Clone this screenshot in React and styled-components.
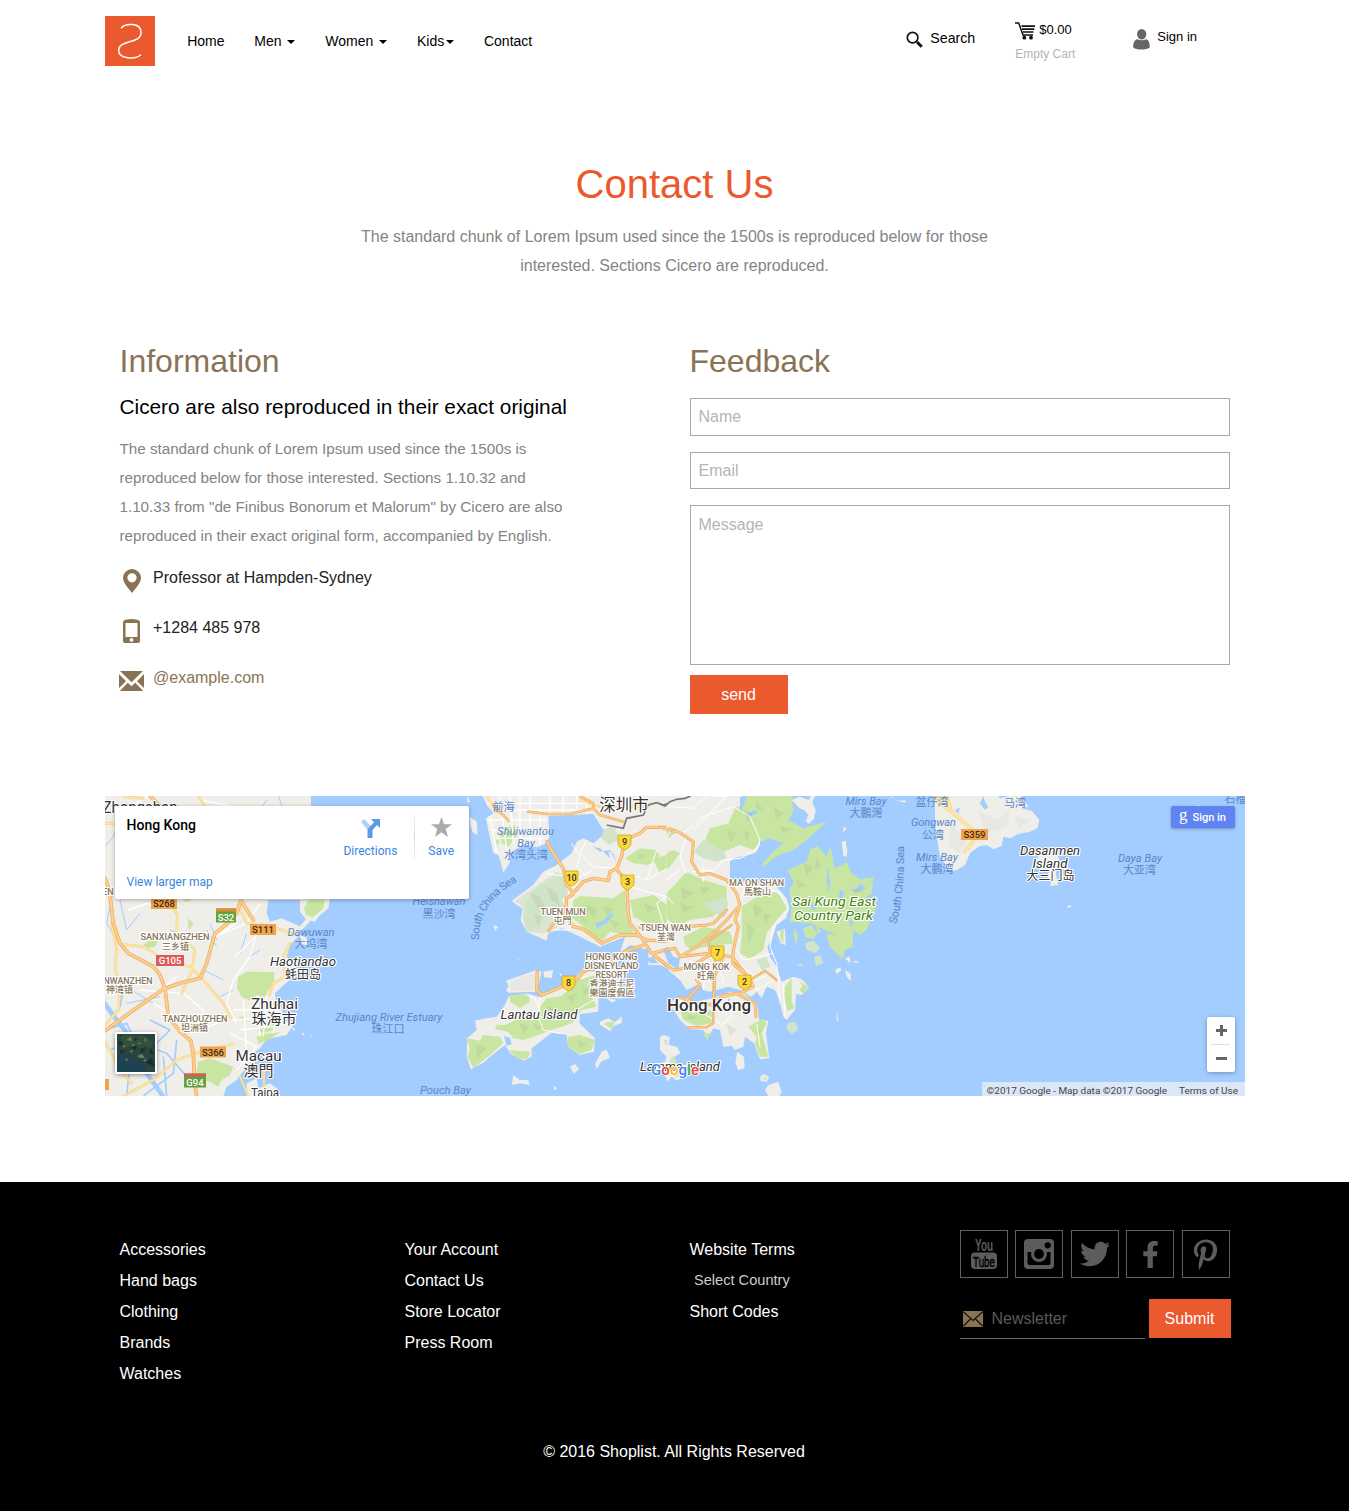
import React from "react";
import styled, { createGlobalStyle, css } from "styled-components";
import { FaTwitter, FaFacebookF, FaPinterestP } from "react-icons/fa";

const GlobalStyle = createGlobalStyle`
  * { box-sizing: border-box; }
  body {
    margin: 0;
    background: #fff;
    color: #000;
    font-family: "Liberation Sans", Arial, sans-serif;
    font-size: 16px;
  }
  h1, h2, h3, p, ul { margin: 0; padding: 0; font-weight: 400; }
  ul { list-style: none; }
  a { color: inherit; text-decoration: none; }
  svg { display: block; flex: none; }
`;

const orange = "#eb592e";
const brown = "#8a7355";

const Container = styled.div`
  width: 1140px;
  margin: 0 auto;
`;

/* ---------- header ---------- */

const Header = styled(Container).attrs({ as: "header" })`
  display: flex;
  align-items: flex-start;
  height: 162px;
  padding-top: 16px;
`;

const Logo = styled.a`
  width: 50px;
  height: 50px;
  margin-left: 0.5px;
  background: ${orange};
`;

const Nav = styled.nav`
  display: flex;
  gap: 29.8px;
  margin-left: 32.2px;
  font-size: 14px;
  line-height: 50px;
  white-space: pre;
`;

const NavLink = styled.a`
  display: flex;
  align-items: center;
`;

const Caret = styled.i`
  width: 8px;
  margin: 2px 0 0 2px;
  border: 4px solid transparent;
  border-top-color: #000;
  border-bottom: 0;
`;

const Tools = styled.div`
  display: flex;
  align-items: flex-start;
  margin-left: auto;
  padding-right: 47.5px;
`;

const Tool = styled.a`
  display: flex;
  gap: ${(p) => p.$gap}px;
  margin: ${(p) => p.$top}px 0 0 ${(p) => p.$left}px;
  font-size: ${(p) => p.$size}px;
  line-height: 20px;
`;

const ToolIcon = styled.span`
  margin-top: ${(p) => p.$drop}px;
`;

const Cart = styled.div`
  width: 61px;
  margin-left: 40px;
  margin-top: 4px;
`;

const CartTotal = styled.div`
  display: flex;
  gap: 4px;
  font-size: 13px;
  line-height: 20px;
`;

const CartState = styled.p`
  margin-top: 4px;
  font-size: 12px;
  line-height: 20px;
  color: #b4b4b4;
`;

/* ---------- contact ---------- */

const Intro = styled.section`
  height: 177px;
  text-align: center;
`;

const Title = styled.h1`
  font-size: 40px;
  line-height: 44px;
  color: ${orange};
`;

const Lead = styled.p`
  width: 660px;
  margin: 16px auto 0;
  line-height: 29px;
  color: #848484;
`;

const Columns = styled(Container).attrs({ as: "section" })`
  display: grid;
  grid-template-columns: 1fr 1fr;
  height: 457px;
`;

const Column = styled.div`
  padding: 0 15px;
`;

const Heading = styled.h2`
  font-size: 32px;
  line-height: 44px;
  color: ${brown};
`;

const SubHeading = styled.h3`
  margin-top: 12px;
  font-size: 20.8px;
  line-height: 24px;
`;

const Body = styled.p`
  width: 452px;
  margin: 15px 0 3px;
  font-size: 15.2px;
  line-height: 29px;
  color: #848484;
`;

const ContactRow = styled.li`
  display: flex;
  height: 50px;
  line-height: 50px;
  color: ${(p) => (p.$link ? brown : "#222")};
`;

const ContactIcon = styled.span`
  display: flex;
  align-items: center;
  justify-content: center;
  width: 25px;
  margin: 3px 9px -3px -0.5px;
`;

const fieldStyle = css`
  display: block;
  width: 540px;
  margin: 0;
  border: 1px solid #a9a9ac;
  border-radius: 0;
  background: #fff;
  font: 16px "Liberation Sans", Arial, sans-serif;
  outline: 0;
  &::placeholder { color: #b5b5b5; opacity: 1; }
`;

const Field = styled.input`
  ${fieldStyle}
  height: ${(p) => p.$height}px;
  margin-bottom: 16px;
  padding: 0 8px;
`;

const Message = styled.textarea`
  ${fieldStyle}
  height: 160px;
  padding: 10px 8px;
  resize: none;
`;

const Form = styled.form`
  margin-top: 15px;
`;

const Button = styled.button`
  width: ${(p) => p.$width}px;
  height: 39px;
  padding: 0;
  border: 0;
  background: ${orange};
  color: #fff;
  font: 16px "Liberation Sans", Arial, sans-serif;
`;

const SendButton = styled(Button)`
  display: block;
  margin-top: 10px;
`;

/* ---------- map ---------- */

const MapFrame = styled.section`
  position: relative;
  width: 1140px;
  height: 300px;
  margin: 0 auto 86px;
  left: 0.5px;
  overflow: hidden;
  font-family: Roboto, "Noto Sans CJK SC", sans-serif;
`;

const PlaceCard = styled.div`
  position: absolute;
  left: 10px;
  top: 10px;
  display: flex;
  width: 354px;
  height: 93px;
  padding: 9px 15px 9px 11.5px;
  border-radius: 2px;
  background: #fff;
  box-shadow: 0 1px 4px rgba(0, 0, 0, 0.3);
  font-size: 12px;
  color: #3a84df;
`;

const PlaceText = styled.div`
  display: flex;
  flex-direction: column;
  justify-content: space-between;
  flex: 1;
`;

const PlaceName = styled.strong`
  font-size: 14px;
  line-height: 20px;
  font-weight: 500;
  color: #000;
`;

const PlaceLink = styled.a`
  line-height: 16px;
`;

const PlaceAction = styled.a`
  display: flex;
  flex-direction: column;
  align-items: center;
  justify-content: flex-end;
  gap: ${(p) => p.$gap}px;
  height: 44px;
  margin: 0 ${(p) => p.$right}px 0 ${(p) => p.$left}px;
  line-height: 16px;
`;

const PlaceDivider = styled.i`
  width: 1px;
  height: 46px;
  background: linear-gradient(#f4f4f4, #d8d8d8, #f4f4f4);
`;

const SignInBadge = styled.a`
  position: absolute;
  right: 10px;
  top: 10px;
  display: flex;
  align-items: center;
  gap: 5px;
  width: 64px;
  height: 22px;
  padding-left: 8px;
  border-radius: 2px;
  background: #5f84f2;
  box-shadow: 0 1px 3px rgba(0, 0, 0, 0.3);
  color: #fff;
  font-size: 11px;
  font-weight: 500;
`;

const GoogleG = styled.span`
  font: 17px/20px "Liberation Serif", serif;
  margin-top: -4px;
`;

const Zoom = styled.div`
  position: absolute;
  right: 10px;
  bottom: 24px;
  width: 28px;
  height: 55px;
  border-radius: 2px;
  background: #fff;
  box-shadow: 0 1px 4px rgba(0, 0, 0, 0.3);
`;

const Thumb = styled.div`
  position: absolute;
  left: 10px;
  top: 236px;
  border: 2px solid #fff;
  border-radius: 2px;
  box-shadow: 0 1px 4px rgba(0, 0, 0, 0.4);
`;

const Attribution = styled.div`
  position: absolute;
  right: 0;
  bottom: 0;
  display: flex;
  justify-content: space-between;
  width: 263px;
  height: 14px;
  padding: 0 7px 0 4.5px;
  background: rgba(238, 240, 243, 0.75);
  font-size: 9.97px;
  line-height: 18px;
  color: #444;
  white-space: nowrap;
`;

/* ---------- footer ---------- */

const Footer = styled.footer`
  height: 329px;
  background: #000;
  color: #fff;
`;

const FooterGrid = styled(Container)`
  display: grid;
  grid-template-columns: 285px 285px 285px 285px;
  height: 260px;
`;

const LinkList = styled.ul`
  padding: 52px 15px 0;
`;

const FooterLink = styled.li`
  height: 30.9px;
  line-height: 31px;
  ${(p) =>
    p.$muted &&
    css`
      padding-left: 4.5px;
      font-size: 14.6px;
      color: #ccc;
    `}
`;

const Connect = styled.div`
  padding-top: 48px;
`;

const Socials = styled.div`
  display: flex;
  justify-content: space-between;
  width: 270px;
`;

const Social = styled.a`
  display: flex;
  align-items: center;
  justify-content: center;
  width: 48px;
  height: 48px;
  border: 1px solid #606060;
  color: #5c5c5c;
`;

const Subscribe = styled.form`
  display: flex;
  gap: 4px;
  margin-top: 21px;
`;

const NewsletterBox = styled.label`
  display: flex;
  align-items: center;
  gap: 9px;
  width: 185px;
  height: 40px;
  padding-left: 3px;
  border-bottom: 1px solid #666;
`;

const NewsletterInput = styled.input`
  flex: 1;
  min-width: 0;
  padding: 0;
  border: 0;
  background: transparent;
  color: #fff;
  font: 16px "Liberation Sans", Arial, sans-serif;
  &::placeholder { color: #5a5a5a; opacity: 1; }
`;

const Copyright = styled.p`
  padding-right: 1px;
  line-height: 20px;
  text-align: center;
`;

/* ---------- icons ---------- */

const LogoMark = () => (
  <svg width="50" height="50" viewBox="0 0 50 50" fill="none" stroke="#fff" strokeWidth="1.500" strokeLinecap="round">
    <path d="M16.500 11.800C20 7.500 36 6 36 16.500C36 28.500 13.700 23 13.700 34.500C13.700 43.500 31 43.200 35.500 39" />
  </svg>
);

const SearchIcon = () => (
  <svg width="17" height="17" viewBox="0 0 17 17" fill="none" stroke="#111">
    <circle cx="6.600" cy="6.600" r="5.300" strokeWidth="1.700" />
    <path d="M11 11l4.700 4.700" strokeWidth="3" />
  </svg>
);

const CartIcon = () => (
  <svg width="20" height="18" viewBox="0 0 20 18" fill="none" stroke="#111">
    <path d="M0 1h3.700l4.300 12h10" strokeWidth="1.500" />
    <path d="M6.500 4.200H20M7 7.200h12.300M8 10h10.500" strokeWidth="1.700" />
    <circle cx="9.300" cy="15.700" r="1.900" fill="#111" stroke="none" />
    <circle cx="16" cy="15.700" r="1.900" fill="#111" stroke="none" />
  </svg>
);

const UserIcon = () => (
  <svg width="17" height="21" viewBox="0 0 17 21" fill="#666">
    <ellipse cx="8.700" cy="5.300" rx="4.600" ry="5.200" />
    <path d="M4.500 10.300c2.500 1.300 6 1.300 8.600 0c2.900.6 3.700 4 3.700 8.200c-4 2.800-12.800 2.800-16.600 0c0-4.200.9-7.600 4.300-8.200z" />
  </svg>
);

const PinIcon = () => (
  <svg width="18" height="24" viewBox="0 0 18 24">
    <path fill={brown} fillRule="evenodd" d="M9 0a9 9 0 0 0-9 9c0 4.500 5 10 9 15c4-5 9-10.500 9-15a9 9 0 0 0-9-9zm0 4.200a4.600 4.600 0 1 1 0 9.200a4.600 4.600 0 0 1 0-9.200z" />
  </svg>
);

const PhoneIcon = () => (
  <svg width="17" height="24" viewBox="0 0 17 24">
    <path fill={brown} fillRule="evenodd" d="M3 .8Q8.500-.6 14 .8Q17 1.200 17 3.500V22q0 2-2 2H2q-2 0-2-2V3.500Q0 1.200 3 .8zM2.500 4v14h12V4zM8.500 19a1.900 1.900 0 1 0 0 3.800a1.900 1.900 0 0 0 0-3.800z" />
  </svg>
);

const EnvelopeIcon = () => (
  <svg width="25" height="20" viewBox="0 0 25 20" fill={brown}>
    <path d="M1 0H24L12.500 11.300z" />
    <path d="M0 3l7 7.200L0 17zM25 3l-7 7.200l7 6.800z" />
    <path d="M.8 20l8-8.200l3.700 3.400l3.700-3.400l8 8.200z" />
  </svg>
);

const NewsletterIcon = () => (
  <svg width="20" height="16" viewBox="0 0 20 16">
    <rect width="20" height="16" rx="1" fill={brown} />
    <path d="M.5 1L10 9.500L19.500 1M.5 15l7-7M19.500 15l-7-7" fill="none" stroke="#111" strokeWidth="1.200" />
  </svg>
);

const YoutubeIcon = () => (
  <svg width="28" height="32" viewBox="0 0 28 32" fontFamily="Liberation Sans, sans-serif" fontWeight="700">
    <text x="5" y="12.500" fontSize="16" textLength="18" lengthAdjust="spacingAndGlyphs" fill="#5c5c5c">You</text>
    <rect x="1" y="14.500" width="26" height="16.500" rx="4" fill="#5c5c5c" />
    <text x="3" y="28.500" fontSize="15" textLength="22" lengthAdjust="spacingAndGlyphs" fill="#000" fontWeight="400" stroke="#000" strokeWidth=".5">Tube</text>
  </svg>
);

const InstagramIcon = () => (
  <svg width="30" height="30" viewBox="0 0 30 30">
    <rect width="30" height="30" rx="4" fill="#5c5c5c" />
    <path d="M3.500 13H26.500V24q0 2-2 2h-19q-2 0-2-2z" fill="#000" />
    <circle cx="15" cy="15" r="8" fill="#5c5c5c" />
    <circle cx="15" cy="15" r="4.900" fill="#000" />
    <circle cx="23.700" cy="6.300" r="3.100" fill="#000" />
  </svg>
);

/* ---------- map drawing ---------- */

const land = "#f0eee9";
const green = "#c8e6a2";
const water = "#a3ccff";

/* motorways carry a darker casing under the lighter core */
const Road = ({ d, w = 8, minor }) => (
  <g fill="none" strokeLinejoin="round" strokeLinecap="round">
    <path d={d} stroke={minor ? "#f3d488" : "#eda957"} strokeWidth={w} />
    <path d={d} stroke={minor ? "#ffe8a5" : "#fccf91"} strokeWidth={w - 4} />
  </g>
);

const Streets = ({ d, w = 3 }) => <path d={d} fill="none" stroke="#fff" strokeWidth={w} strokeLinejoin="round" />;

/* faint hill shading */
const Relief = ({ d }) => <path d={d} fill="#8a8a78" fillOpacity=".13" />;

const tones = {
  sea: { fill: "#5a87c9", fontStyle: "italic", halo: "none" },
  seaHan: { fill: "#5a87c9", halo: "none" },
  town: { fill: "#86765c", fontWeight: 500, halo: "#fff" },
  city: { fill: "#333", halo: "#fff" },
  isle: { fill: "#333", fontStyle: "italic", halo: "#fff" },
  park: { fill: "#3f8410", fontStyle: "italic", halo: "#fff" },
};

const Label = ({ x, y, s = 11, w, tone = "sea", children, ...rest }) => {
  const { halo, ...look } = tones[tone];
  return (
    <text x={x} y={y} fontSize={s} textAnchor="middle" textLength={w} lengthAdjust="spacingAndGlyphs"
      stroke={halo} strokeWidth="2.200" strokeLinejoin="round" paintOrder="stroke" {...look} {...rest}>
      {children}
    </text>
  );
};

const Sign = ({ x, y, w = 26, fill = "#f1a24c", color = "#3d2c10", cap, children }) => (
  <g>
    <rect x={x} y={y} width={w} height={cap ? 14 : 11} fill={fill} />
    {cap && <rect x={x} y={y} width={w} height="3" fill={cap} />}
    <text x={x + w / 2} y={y + (cap ? 12 : 9)} fontSize="9.500" fontWeight="500" textAnchor="middle" fill={color}>{children}</text>
  </g>
);

const Shield = ({ x, y, n }) => (
  <g>
    <path d={`M${x - 6.5} ${y - 7}h13v8q0 4-6.500 7q-6.500-3-6.500-7z`} fill="#fbd837" stroke="#c9a526" strokeWidth=".8" />
    <text x={x} y={y + 3.3} fontSize="9" fontWeight="500" textAnchor="middle" fill="#333">{n}</text>
  </g>
);

const WestShore = () => (
  <g transform="translate(-5 -6) scale(.33333)">
    <path fill={land} d="M0 0H633V60L600 330H505L500 370L510 395L545 385L575 398L605 412L590 445L570 465L560 500L585 530L575 565L545 590L525 610L530 640L545 655L550 690L580 705L560 735L500 748L480 775L460 790L455 820L425 850L410 870L380 890L370 918V960H0z" />
    <path fill={land} d="M600 325H690L685 355L655 380L645 395L620 390L600 365zM620 385l10 10l-25 25l-10-5zM600 435l28 12l-8 18l-24-4zM440 880L470 865L475 895L510 880L530 895L545 925H440zM608 725l6 12l-8-2zM630 735l8 4l-8 0zM575 712l12 4l-6 8z" />
    <path fill={green} d="M415 560L440 545L522 546L524 585L505 600L495 620L470 615L450 632L425 620L410 595zM295 815L330 805L400 830L390 855L365 870L355 890L330 875L300 870L290 845zM130 465L150 450L175 455L165 470L140 474zM265 385l15 15l-10 20l-6-10zM470 740l20-8l50-5l-30 20l-35 15zM240 325h40l-20 12zM415 685l20-10l0 20zM470 720l45-15l15-25l5 10l-15 30l-30 10zM612 355L625 330L675 328L670 355L640 382L618 375zM480 395l40 25l-20 10z" />
    <g fill="none" stroke={water} strokeLinejoin="round">
      <path strokeWidth="14" d="M10 635L50 690L110 765L140 850L190 920" />
      <path strokeWidth="5" d="M10 720L80 700L110 760L200 790L260 860M30 780L150 730L160 780L90 820L80 918M150 690L210 720L130 800M20 700L60 650L70 600L50 560M190 800L200 918M230 750L220 850L130 918" />
      <path strokeWidth="3" d="M40 300L20 400L70 480M60 330L80 420L120 370M80 110L60 220L110 300M15 170L40 140L70 60L130 70M480 60L500 30M535 18L550 60M320 420L350 470M310 540L370 570M450 500L480 480M210 420L260 440M30 560L160 640M80 640L180 620M360 620L400 600M330 400l20 50M440 430l-20 60" />
    </g>
    <Streets d="M470 430L450 500L400 570L380 640L410 700M400 660H530M395 690L550 680M430 630L440 800M470 620L480 740M500 620L490 740M390 730L470 770L410 840M530 660L520 730M410 400L345 440L440 400L480 340M120 600L250 610L310 660L300 720L380 690M85 360L140 340L200 360M160 640L260 700M230 560L180 600M405 500l80-80M120 80L100 45L145 18M300 30L400 50M420 720L520 710" w="4" />
    <Road minor d="M15 100H60M70 20L130 25M205 325L232 375L230 420L232 440L270 465L285 480L275 545L245 610M60 462L130 470L180 500L270 530L310 570L370 640L395 685M35 400L50 480L45 530L60 600L55 660L15 705M70 918L160 870L230 810L300 785L400 762M415 345L440 400L530 415L590 435M570 460L550 500L555 560L520 580L508 615M15 755L60 840L95 880" />
    <Road minor d="M420 860L445 918M492 840V918M295 18L315 48" w={7} />
    <Road d="M150 18L180 48M15 265L28 300L40 400L60 460L85 490L160 530L180 555L195 595L205 680L240 725L272 752L280 790L283 870L290 918M15 722L90 668L190 597L240 580L300 565L320 520L345 430L380 402L410 370L425 325M425 335L460 390" w={11} />
  </g>
);

const Shenzhen = () => (
  <g transform="translate(275 -6) scale(.33333)">
    <path fill={land} d="M300 0H960V400H800L690 140L665 112L640 72L505 78L508 140L500 160L470 172L430 165L395 185L388 220L370 248L362 215L355 195L340 190L325 120L318 85L340 70L320 45zM262 15L270 35L262 40zM268 80l22 14l3 40l-20-20zM277 105l14 10v20l-15-10z" />
    <path fill={land} d="M700 110L640 160L610 145L590 155L575 190L530 225L490 245L460 285L395 332L410 345L428 355L422 390L440 425L500 452L505 430L545 415L600 440L660 470L735 440L720 490L750 465L805 480L805 525L840 525L860 535H1050V60H780zM340 405l15 5l-10 12zM360 455l5 25zM415 505l4 2l-4 3z" />
    <path fill="#dce5d2" d="M405 332L475 285L530 245L555 260L565 310L550 390L520 425L480 430L440 425L430 390L428 350z" />
    <path fill="#d1e3c8" d="M475 285L548 255L560 310L545 350L500 365L480 420L440 425L430 385L440 330z" />
    <path fill={green} d="M580 330L600 318L700 325L735 300L740 380L765 440L690 425L665 455L630 430L605 405L575 385zM735 205L780 175L830 180L845 210L800 225L760 220zM750 330L820 315L870 350V410L800 400L760 380zM360 120l45-15l5 35l-25 30l-20-10zM345 145l15 8l-8 15zM820 210L870 190V230L840 250z" />
    <path fill="#d3e4c8" d="M670 120L705 105L715 150L685 165L665 145z" />
    <path fill={water} d="M645 400l25-8l25-25l5 8l-20 25l-30 15zM640 170l20 15l30-5l20 40l-10-30l-15-5l5 20l-30-30zM800 505l20-5l15 20h-25z" />
    <path fill={land} d="M378 572L470 540L485 546L470 605L385 608L378 600L386 588zM490 545l30-5l-5 25l-22-3z" />
    <path fill="#e8e7e5" d="M390 575L468 545L460 600L390 604z" />
    <path fill={land} d="M385 620L440 610L480 622L530 602L580 570L610 535L640 545L720 530L750 535L720 580L690 600L655 625L655 665L600 672L598 700L645 745L642 785L600 795L565 770L560 735L515 728L455 775V800L430 812L390 790L375 765L330 800L310 818L272 838L260 800L262 745L290 720L285 692L320 685L350 680L375 645z" />
    <path fill={green} d="M258 745L300 752L310 735L360 740L370 760L330 795L280 835L262 800L270 775zM390 615L445 612L450 635L420 655L390 635zM375 705L420 685L470 690L480 650L500 625L545 618L600 565L655 575L630 610L650 650L605 660L575 700L515 720L475 735L430 750L400 745L385 725L345 718L350 704zM565 740L600 735L645 750L635 780L600 792L562 768zM385 780L450 785L445 805L420 810zM610 565L690 545L670 570L640 580z" />
    <path fill={water} d="M372 738l18 5l5 20l-15 5z" />
    <path fill={land} d="M660 695l25-10l20 12l20-18v20l-25 10l-10 15l-30-20zM665 785l15-6l10 25l-25 10l-15 22l-5-15zM570 830l15-8l12 15l-15 15zM400 855l20 15h25l5 15l-30-5l-25 5zM520 888l12 6l-8 8zM710 495l15-5l-5 10zM650 480l8 3zM680 625l30 5l-15 8z" />
    <path fill={green} d="M675 698l30-4l15-10l-18 15l-5 20l-22-15z" />
    <Relief d="M450 310l30 10l20 40l-30-10zM500 290l30 20l10 40l-25-20zM460 370l25 10l-10 30zM620 345l30 10l-5 25l-25-15zM670 350l30 5l-20 25zM600 370l25 30l-15-5zM690 390l30 10l-15 15zM770 190l30 5l-20 15zM790 340l40 15l-25 15zM290 765l30 10l-30 30zM420 700l30 10l-20 20zM500 650l40 10l-30 30zM560 620l30-10l-15 30zM590 750l30 10l-20 15zM460 700l30 10l-20 12zM610 590l25 10l-25 20z" />
    <Streets d="M575 160L600 200L590 230L620 260M620 150L600 190L640 230L700 235M640 240L560 280L570 330M500 250L560 260L600 290M740 250L800 270L870 230M750 290L820 310L860 320L830 340L850 400L870 430M550 330L570 420L520 420M545 330L595 310M830 180L800 270M480 620L475 680L490 720L540 730M440 615L465 625L480 660M480 680L540 690L640 630M540 550L560 580L620 560" />
    <Streets d="M320 90H500M340 60H640M320 40H650M360 18L380 180M390 18L400 160M420 20V165M450 18V165M480 60V165M510 18V72M550 18V72M590 18V70M620 18V70M335 120H500M340 145H495M330 80L350 190" w="4" />
    <Road minor d="M320 18L350 65M600 30L660 50L800 50" />
    <Road d="M340 45L385 92M445 65L500 72L570 72L640 55L640 40L600 18M640 55L660 75L730 95" w={8} />
    <Road d="M500 155L520 190L550 235L560 285L580 310L610 275L640 265L685 272L690 245L710 235L725 200L733 150L780 130L800 112H870M710 238L740 275L745 370L750 400L790 450L810 485L870 535M580 312L560 325L555 375L580 410L605 415L635 435L665 460L720 435L770 435L800 450L870 455M700 508L735 485L790 465M472 545L470 600L485 615L510 605L590 570L610 545L700 510M820 490L870 475M780 412L870 415" w={10} />
    <Road d="M505 422L522 398" w={8} />
    <path d="M680 105L730 115L740 85L790 75L805 45L830 38L850 45L870 38" fill="none" stroke="#777" strokeWidth="5" />
  </g>
);

const HongKong = () => (
  <g transform="translate(555 -6) scale(.33333)">
    <path fill={land} d="M20 0H255L240 35L250 60L300 130L300 165L285 190L220 205L190 235L150 240L210 268L250 275L300 290L345 285L380 325L388 350L378 385L350 405L335 450L322 470L330 500L350 530L365 575L400 560L425 568L447 592L425 615L408 612L405 660L380 690L370 680L360 635L345 600L320 590L305 625L290 605L275 620L240 600L205 590L170 600L150 605L130 600L120 580L80 600L60 570L30 545L20 530z" />
    <path fill={land} d="M20 640L60 620L100 635L160 625L210 605L250 610L290 640L298 690L325 692L318 730L328 805L300 808L282 760L255 740L250 770L225 780L215 768L190 770L180 720L160 715L145 740L130 720L90 718L60 690L45 665zM0 740L12 735L30 742L26 765L50 770L62 790L42 800L50 825L95 825L88 850L50 872L35 860L22 875L10 840L-5 845L-20 825L15 815L20 800L0 780zM232 785l20 15l2 35l-20 5l-8-25zM300 860l12-8l15 8l-5 15l-20-2zM325 885l30-10l10 30l-10 18l-30-5l-10-18z" />
    <path fill={green} d="M225 55L245 45L250 15H395L400 65L385 90L430 115L500 95L440 150L400 180L345 200L310 232L308 220L340 185L370 160L330 145L300 155L280 180L240 165L190 185L150 175L135 150L150 115L205 100z" />
    <path fill={green} d="M382 240L440 215L450 180L472 168L500 200L510 170L518 200L522 235L545 225L560 215L575 250L600 268L640 262L635 310L615 325L650 345L620 420L600 435L580 420L578 470L555 480L548 508L510 470L498 430L530 435L450 400L390 395L395 350L388 300L402 275z" />
    <path fill={green} d="M20 310L80 245L130 270L200 290L200 330L160 380L90 390L50 410L20 385zM245 350L290 320L350 305L385 350L350 390L320 430L310 480L270 508L240 490L245 440zM70 440L130 410L210 425L220 460L140 470L95 480L75 465zM20 190L40 180L60 190L30 230L20 240zM20 115L30 110L55 120L20 150zM60 660L100 670L155 660L155 700L110 708L70 690zM265 710L310 685L320 700L305 730L325 800L300 800L285 760L290 740zM130 730h20l-8 22zM375 590l20-25v70l8 20l-20 8l-12-45zM415 572l30 18l-15 20l-12-8l10-15z" />
    <path fill="#d1e3c8" d="M100 185L130 150L190 180L200 205L170 215L130 205zM130 340L190 320L205 340L195 380L160 370zM435 460L460 450L480 475L465 490L440 480zM462 500l18-5l10 25l-22 8zM382 700l25-5l8 25l-20 12l-15-15zM410 525l15-5v10zM8 750l15 0l-3 18zM35 800l10 0l8 30l30 2l-5 15l-30 15l-20-10l-18-10l15-20zM290 510l30-10l10 30l-25 10zM305 865l15-5v12z" />
    <path fill={water} d="M240 22L260 18L245 60L255 70L240 60zM255 75l30-15l10 8l-30 12zM600 280l20 15l-35 12l-15-10l20 2zM500 270l5-40l5 50l-3 30zM450 345l15-10l5 20l-10 8zM570 360l25 3l-10 10zM440 420l30 5l10 25l-30 3zM560 380l20 20l-5 10zM540 300l12 5l-5 25l-10-10zM10 480L25 470L40 500L60 505L55 540L25 520zM200 630l10-5l-5 30z" />
    <path fill={land} d="M395 30l22-10l30 10l5-12l15-4l-10 22l10 25l-5 25l-15 15l-10-6l8-20l-12-15l-15-5zM550 110l10 5l-10 15zM545 155l12-3l5 30l-2 18l-10-2zM690 15l20 18l25-2l5 7l-20-3l-25-12zM555 505l15-5v20zM525 540l15-8l5 8l-15 12zM555 540l18 12l-2 22l-12-16zM530 660l5 30l-5 5zM575 515l15-3l8 8zM350 425l25-8l2 48l-15-5z" />
    <path fill={green} d="M360 425l12-8l-3 45l-8-15zM402 415l12 20l-5 30l-8-25zM430 415l25-10l15 25l-10 18l-25-8zM470 395l12 30l-12 10z" />
    <Relief d="M250 60l30 10l-15 30zM290 30l20 30l-25-5zM340 50l30 20l-20 20zM200 120l30 10l-20 30zM250 120l20 10l-10 25zM360 110l40 5l-30 15zM430 220l30 10l-20 30zM470 200l15 30l-20 10zM580 290l30 10l-25 15zM410 270l30 15l-25 10zM60 290l40 20l-30 20zM120 290l30 5l-20 20zM60 340l40 10l-30 20zM280 340l30 20l-25 25zM260 400l25 20l-20 40zM310 370l25 5l-20 25zM80 675l30 5l-20 12zM200 700l30 20l-20 20zM290 710l15 10l-10 20z" />
    <Streets d="M20 150L30 120L70 130L130 80L220 50L270 80L300 150L290 180L240 205L190 210L165 240L100 245M80 140L60 200L80 250M20 270L60 240M20 320L40 340M230 350L260 280L310 290L360 310L385 360L340 410L330 470L350 520L355 570L360 640M230 480L250 510L320 495L340 490M240 520L290 570L330 550M90 510L130 560M110 490L150 580M130 600L140 500M170 500L190 580M110 240L160 245M290 700L300 770M200 625L215 680L180 710M60 630L180 700M250 540L290 600L340 570M370 580L375 680M140 18L100 55L25 50M160 20L200 20L100 120M130 230V275M150 235V250" />
    <Road d="M0 112L60 128L100 155L95 215L120 255L150 250L200 270L230 310L240 345L205 385L160 430L110 470L60 500M60 500L100 495L150 490L215 500L240 530L270 570L280 590L240 610L190 615L160 645L110 640L60 622M160 645L163 560L190 500M240 345L225 390L235 410L220 480L218 520L245 545M60 500L45 475L20 480M0 510L40 540L80 535L160 490M110 570L120 585L75 635M190 620L230 610L285 640L288 680M55 412L140 405L160 400L200 360" w={9} />
    <Road d="M270 570L315 542L350 570M160 645V700L140 712L85 712M150 490L145 455L215 405M165 480L163 600" w={7} />
    <path d="M0 42L15 48L30 35L50 28L75 25L92 18" fill="none" stroke="#777" strokeWidth="5" />
    <path d="M275 185L309 225" stroke="#8dacd7" strokeWidth="1" />
  </g>
);

const EastShore = () => (
  <g transform="translate(845 -6) scale(.33333)">
    <path fill={land} d="M-45 0H130L150 25L190 15L215 18L235 50L215 55L245 62L268 90L262 115L240 125L205 132L180 145L160 140L155 168L130 178L110 165L85 170L60 190L45 225L20 240L0 245L-30 200L-40 140L-45 90z" />
    <path fill="#e8e7e2" d="M80 60L140 90L180 60L170 110L110 130zM0 100L50 150L30 190L0 170zM190 80L240 90L210 115z" />
    <path fill={water} d="M100 18L90 40L105 60L115 50L105 35zM15 60l15-8l-5 20z" />
    <path fill={land} d="M265 195L320 190L330 215L315 230L320 265L325 285L300 288L305 270L290 260L300 240L260 225zM353 347l10-2v8l-12-1zM345 205l10 4zM740 48l8-4v6z" />
    <Road minor d="M-45 30L0 60L50 105L75 125L70 155L45 185M-45 25L-10 18L0 50" w={11} />
  </g>
);

const MapDrawing = () => (
  <svg width="1140" height="300" viewBox="0 0 1140 300">
    <rect width="1140" height="300" fill={water} />
    <WestShore />
    <Shenzhen />
    <HongKong />
    <EastShore />
    <g transform="translate(-105 -796)">
      <Label x={140} y={813} s={16} w={75} tone="city">Zhongshan</Label>
      <Label x={108} y={895} s={9} tone="town">EN</Label>
      <Label x={175} y={940} s={9} w={69} tone="town">SANXIANGZHEN</Label>
      <Label x={175.5} y={949.5} s={9} tone="town">三乡镇</Label>
      <Label x={128} y={984} s={9} w={49} tone="town">NWANZHEN</Label>
      <Label x={119.5} y={993} s={9} tone="town">神湾镇</Label>
      <Label x={195} y={1022} s={9} w={65} tone="town">TANZHOUZHEN</Label>
      <Label x={194.5} y={1031} s={9} tone="town">坦洲镇</Label>
      <Label x={311} y={936} w={47}>Dawuwan</Label>
      <Label x={311} y={948} tone="seaHan">大坞湾</Label>
      <Label x={303} y={965.5} s={12} w={66} tone="isle">Haotiandao</Label>
      <Label x={303} y={978.5} s={12} tone="city">蚝田岛</Label>
      <Label x={274.5} y={1008.5} s={15} w={47} tone="city">Zhuhai</Label>
      <Label x={274} y={1023.5} s={15} tone="city">珠海市</Label>
      <Label x={258.5} y={1061} s={15} w={46} tone="city">Macau</Label>
      <Label x={258.5} y={1075.5} s={15} tone="city">澳門</Label>
      <Label x={265} y={1097} s={12} w={28} tone="city">Taipa</Label>
      <Label x={389} y={1021} w={107}>Zhujiang River Estuary</Label>
      <Label x={388} y={1033} tone="seaHan">珠江口</Label>
      <Label x={445.5} y={1094} w={51}>Pouch Bay</Label>
      <Label x={439} y={905} w={53}>Heishawan</Label>
      <Label x={439} y={917.5} tone="seaHan">黑沙湾</Label>
      <Label x={503.5} y={810.5} tone="seaHan">前海</Label>
      <Label x={525.5} y={835} w={57}>Shuiwantou</Label>
      <Label x={526} y={847}>Bay</Label>
      <Label x={526} y={859} tone="seaHan">水湾头湾</Label>
      <Label x={624} y={811} s={16.5} tone="city">深圳市</Label>
      <path id="seaWest" d="M479 940Q477 903 520 880" fill="none" />
      <text fontSize="11" fill="#5a87c9"><textPath href="#seaWest" textLength="74">South China Sea</textPath></text>
      <path id="seaEast" d="M896 924Q905 895 904 843" fill="none" />
      <text fontSize="11" fill="#5a87c9"><textPath href="#seaEast" textLength="79">South China Sea</textPath></text>
      <Label x={563} y={915} s={9} w={45} tone="town">TUEN MUN</Label>
      <Label x={562.5} y={924} s={9} tone="town">屯門</Label>
      <Label x={665.5} y={931} s={9} w={51} tone="town">TSUEN WAN</Label>
      <Label x={666} y={940} s={9} tone="town">荃灣</Label>
      <Label x={611.5} y={960} s={9} w={52} tone="town">HONG KONG</Label>
      <Label x={611.5} y={969} s={9} w={54} tone="town">DISNEYLAND</Label>
      <Label x={611.5} y={978} s={9} w={32} tone="town">RESORT</Label>
      <Label x={612} y={987} s={9} tone="town">香港迪士尼</Label>
      <Label x={612} y={996} s={9} tone="town">樂園度假區</Label>
      <Label x={756.5} y={886} s={9} w={55} tone="town">MA ON SHAN</Label>
      <Label x={757.5} y={895} s={9} tone="town">馬鞍山</Label>
      <Label x={706.5} y={970} s={9} w={46} tone="town">MONG KOK</Label>
      <Label x={706} y={979} s={9} tone="town">旺角</Label>
      <Label x={539} y={1018.5} s={12.5} w={77} tone="isle">Lantau Island</Label>
      <Label x={680} y={1070.5} s={12.5} w={80} tone="isle">Lamma Island</Label>
      <Label x={709} y={1011} s={16.5} w={84} tone="city" fontWeight="500">Hong Kong</Label>
      <Label x={834} y={906} s={13} w={84} tone="park">Sai Kung East</Label>
      <Label x={833.5} y={920} s={13} w={79} tone="park">Country Park</Label>
      <Label x={866} y={805} w={41}>Mirs Bay</Label>
      <Label x={866} y={817} tone="seaHan">大鵬灣</Label>
      <Label x={932} y={806} tone="seaHan">盆仔湾</Label>
      <Label x={933.5} y={826} w={45}>Gongwan</Label>
      <Label x={933} y={839} tone="seaHan">公湾</Label>
      <Label x={937} y={861} w={42}>Mirs Bay</Label>
      <Label x={937} y={873} tone="seaHan">大鹏湾</Label>
      <Label x={1015} y={807} tone="seaHan">马湾</Label>
      <Label x={1050} y={854.5} s={12} w={60} tone="isle">Dasanmen</Label>
      <Label x={1050} y={867.5} s={12} w={35} tone="isle">Island</Label>
      <Label x={1050.5} y={879.5} s={12} tone="city">大三门岛</Label>
      <Label x={1140} y={862} w={44}>Daya Bay</Label>
      <Label x={1139.5} y={874} tone="seaHan">大亚湾</Label>
      <Label x={1241} y={803} tone="seaHan">石榴湾</Label>
      <Sign x={151} y={898}>S268</Sign>
      <Sign x={216} y={908.5} w={20} fill="#63a23d" color="#fff" cap="#e28a35">S32</Sign>
      <Sign x={250} y={924}>S111</Sign>
      <Sign x={156} y={955} w={28} fill="#d95b5b" color="#fff">G105</Sign>
      <Sign x={200} y={1046.5}>S366</Sign>
      <Sign x={184} y={1073.5} w={22} fill="#63a23d" color="#fff" cap="#d95b5b">G94</Sign>
      <Sign x={961} y={829} w={27}>S359</Sign>
      <Sign x={83} y={1079} w={26}>S2</Sign>
      <Shield x={624.5} y={842} n="9" />
      <Shield x={571.5} y={878} n="10" />
      <Shield x={627.5} y={882} n="3" />
      <Shield x={717.5} y={953} n="7" />
      <Shield x={744.5} y={982} n="2" />
      <Shield x={568.5} y={983} n="8" />
      <text x="651" y="1075" fontSize="15" fontWeight="500" textLength="48" stroke="#fff" strokeWidth="1.600" paintOrder="stroke">
        <tspan fill="#4285f4">G</tspan><tspan fill="#ea4335">o</tspan><tspan fill="#fbbc05">o</tspan>
        <tspan fill="#4285f4">g</tspan><tspan fill="#34a853">l</tspan><tspan fill="#ea4335">e</tspan>
      </text>
    </g>
  </svg>
);

const SatelliteTile = () => (
  <svg width="38" height="38" viewBox="0 0 38 38">
    <rect width="38" height="38" fill="#29433f" />
    <path d="M0 22l8-3l9 6l8 2l5 11H0z" fill="#1f4253" />
    <path d="M3 3l7-3l9 3l7-2l10 6l-2 8l-6-4l-4 4l-8-4l-7 3z" fill="#33503c" />
    <path d="M9 6l5-3l1 4zM5 12l4-1l-2 3zM15 10l3 1l-3 2zM22 8l3 2l-4 0zM27 4l3 2l-2 2zM20 22l5-2l3 4l-5 0zM26 26l4-1l-1 3zM8 24l4 2l-3 1zM12 17l4-1l-1 3z" fill="#6b7a62" />
    <path d="M14 13l6-1l-2 4zM28 28l7-4l3 9zM2 7l4 2l-4 3zM24 14l5 2l-5 3zM3 16l5 1l-4 3zM17 4l4 1l-3 2zM33 14l4 6l-4 0z" fill="#172e2c" />
  </svg>
);

const DirectionsIcon = () => (
  <svg width="19" height="19" viewBox="0 0 19 19">
    <path d="M0 3l3-3l8 8l-3.500 4z" fill="#b1d0f8" />
    <path d="M10 0h9v9l-3-3l-4.500 5v8H6.500v-8.500L13 3.300z" fill="#5e9ae4" />
  </svg>
);

const StarIcon = () => (
  <svg width="21" height="20" viewBox="0 0 21 20">
    <path d="M10.500 0l2.500 7.300h8l-6.300 4.800L17 20l-6.500-4.700L4 20l2.300-7.900L0 7.300h8z" fill="#aaa" />
  </svg>
);

const ZoomIcon = () => (
  <svg width="28" height="55" viewBox="0 0 28 55">
    <path d="M9 13.500h11M14.500 8v11M9 41.500h11" stroke="#666" strokeWidth="3" />
    <path d="M4 27.500h19" stroke="#ddd" />
  </svg>
);

/* ---------- page ---------- */

const menu = [
  { label: "Home" },
  { label: "Men ", caret: true },
  { label: "Women ", caret: true },
  { label: "Kids", caret: true },
  { label: "Contact" },
];

const contacts = [
  { icon: <PinIcon />, text: "Professor at Hampden-Sydney" },
  { icon: <PhoneIcon />, text: "+1284 485 978" },
  { icon: <EnvelopeIcon />, text: "@example.com", link: true },
];

const footerLists = [
  ["Accessories", "Hand bags", "Clothing", "Brands", "Watches"],
  ["Your Account", "Contact Us", "Store Locator", "Press Room"],
  ["Website Terms", "Select Country", "Short Codes"],
];

const socials = [
  <YoutubeIcon key="y" />,
  <InstagramIcon key="i" />,
  <FaTwitter key="t" size={30} />,
  <FaFacebookF key="f" size={27} />,
  <FaPinterestP key="p" size={31} />,
];

export default function App() {
  return (
    <>
      <GlobalStyle />
      <Header>
        <Logo><LogoMark /></Logo>
        <Nav>
          {menu.map((m) => (
            <NavLink key={m.label}>{m.label}{m.caret && <Caret />}</NavLink>
          ))}
        </Nav>
        <Tools>
          <Tool $gap={7.5} $top={12} $left={0} $size={14.2}>
            <ToolIcon $drop={3}><SearchIcon /></ToolIcon>Search
          </Tool>
          <Cart>
            <CartTotal><ToolIcon $drop={2}><CartIcon /></ToolIcon>$0.00</CartTotal>
            <CartState>Empty Cart</CartState>
          </Cart>
          <Tool $gap={7} $top={11} $left={57} $size={13}>
            <ToolIcon $drop={1.5}><UserIcon /></ToolIcon>Sign in
          </Tool>
        </Tools>
      </Header>

      <Intro>
        <Title>Contact Us</Title>
        <Lead>
          The standard chunk of Lorem Ipsum used since the 1500s is reproduced below for those
          interested. Sections Cicero are reproduced.
        </Lead>
      </Intro>

      <Columns>
        <Column>
          <Heading>Information</Heading>
          <SubHeading>Cicero are also reproduced in their exact original</SubHeading>
          <Body>
            The standard chunk of Lorem Ipsum used since the 1500s is reproduced below for those
            interested. Sections 1.10.32 and 1.10.33 from "de Finibus Bonorum et Malorum" by Cicero
            are also reproduced in their exact original form, accompanied by English.
          </Body>
          <ul>
            {contacts.map((c) => (
              <ContactRow key={c.text} $link={c.link}>
                <ContactIcon>{c.icon}</ContactIcon>{c.text}
              </ContactRow>
            ))}
          </ul>
        </Column>
        <Column>
          <Heading>Feedback</Heading>
          <Form>
            <Field $height={38} placeholder="Name" />
            <Field $height={37} placeholder="Email" />
            <Message placeholder="Message" />
            <SendButton type="button" $width={98}>send</SendButton>
          </Form>
        </Column>
      </Columns>

      <MapFrame>
        <MapDrawing />
        <PlaceCard>
          <PlaceText>
            <PlaceName>Hong Kong</PlaceName>
            <PlaceLink>View larger map</PlaceLink>
          </PlaceText>
          <PlaceAction $gap={5} $left={0} $right={17}><DirectionsIcon />Directions</PlaceAction>
          <PlaceDivider />
          <PlaceAction $gap={6} $left={13} $right={0}><StarIcon />Save</PlaceAction>
        </PlaceCard>
        <SignInBadge><GoogleG>g</GoogleG>Sign in</SignInBadge>
        <Zoom><ZoomIcon /></Zoom>
        <Thumb><SatelliteTile /></Thumb>
        <Attribution>
          <span>©2017 Google - Map data ©2017 Google</span>
          <span>Terms of Use</span>
        </Attribution>
      </MapFrame>

      <Footer>
        <FooterGrid>
          {footerLists.map((list) => (
            <LinkList key={list[0]}>
              {list.map((t) => (
                <FooterLink key={t} $muted={t === "Select Country"}>{t}</FooterLink>
              ))}
            </LinkList>
          ))}
          <Connect>
            <Socials>
              {socials.map((icon) => <Social key={icon.key}>{icon}</Social>)}
            </Socials>
            <Subscribe>
              <NewsletterBox>
                <NewsletterIcon />
                <NewsletterInput placeholder="Newsletter" />
              </NewsletterBox>
              <Button type="button" $width={82}>Submit</Button>
            </Subscribe>
          </Connect>
        </FooterGrid>
        <Copyright>© 2016 Shoplist. All Rights Reserved</Copyright>
      </Footer>
    </>
  );
}
